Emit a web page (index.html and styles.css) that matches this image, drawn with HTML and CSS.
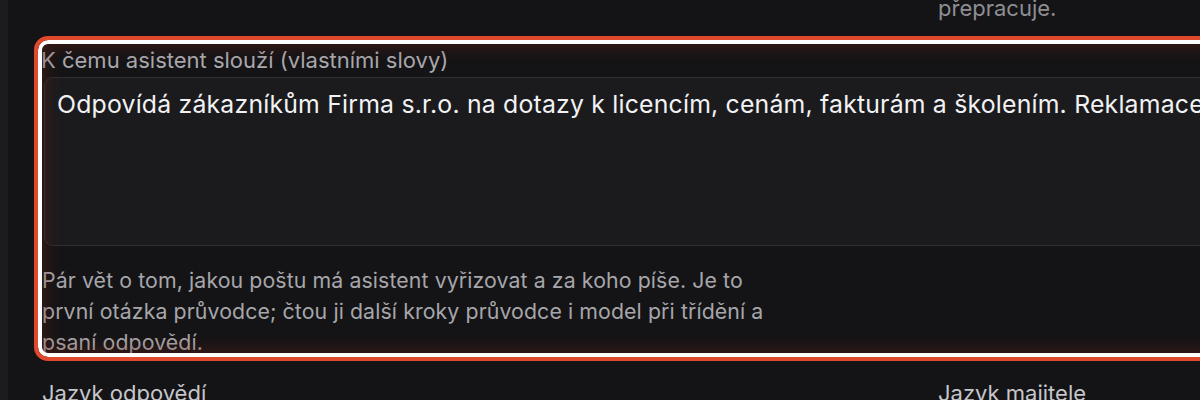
FILE: index.html
```html
<!DOCTYPE html>
<html lang="cs">
<head>
<meta charset="utf-8">
<title>Nastavení asistenta</title>
<link rel="stylesheet" href="styles.css">
</head>
<body>
<div class="page">
  <div class="rail"></div>
  <main class="form">
    <div class="row top-row">
      <div class="cell"></div>
      <p class="hint">přepracuje.</p>
    </div>
    <div class="field highlighted">
      <label class="label" for="purpose">K čemu asistent slouží (vlastními slovy)</label>
      <textarea id="purpose" class="input">Odpovídá zákazníkům Firma s.r.o. na dotazy k licencím, cenám, fakturám a školením. Reklamace předává kolegům.</textarea>
      <p class="help">Pár vět o tom, jakou poštu má asistent vyřizovat a za koho píše. Je to první otázka průvodce; čtou ji další kroky průvodce i model při třídění a psaní odpovědí.</p>
    </div>
    <div class="row">
      <div class="sub-label">Jazyk odpovědí</div>
      <div class="sub-label">Jazyk majitele</div>
    </div>
  </main>
</div>
</body>
</html>
```
FILE: styles.css
```css
html, body {
  margin: 0;
  padding: 0;
  background: #141416;
  overflow: hidden;
  height: 400px;
}
body {
  font-family: Inter, "Noto Sans", sans-serif;
  color: #e8e8ea;
}
.page {
  display: flex;
  height: 400px;
}
.rail {
  width: 8px;
  flex: none;
  background: #1c1c1f;
}
.form {
  flex: none;
  width: 1760px;
  padding-left: 34px;
  display: flex;
  flex-direction: column;
}
.row {
  display: grid;
  grid-template-columns: 860px 1fr;
  column-gap: 36px;
}
.top-row {
  margin-top: -7px;
}
.hint {
  margin: 0;
  font-size: 22px;
  line-height: 31px;
  color: #8e8e93;
}
.field {
  position: relative;
  flex: none;
  margin-top: 20px;
  height: 309px;
}
.field.highlighted::after {
  content: "";
  position: absolute;
  top: -8px;
  left: -8px;
  right: -8px;
  bottom: -8px;
  border: 4px solid #e0492b;
  border-radius: 14px;
  box-shadow: inset 0 0 0 4px #ffffff, inset 0 0 18px 6px rgba(120, 36, 22, 0.45);
  pointer-events: none;
}
.label {
  display: block;
  padding-top: 3px;
  margin-left: -1px;
  font-size: 22px;
  line-height: 26px;
  color: #a9a9ae;
}
.input {
  box-sizing: border-box;
  display: block;
  margin: 4px 0 0 2px;
  width: calc(100% - 2px);
  height: 169px;
  padding: 10px 12px;
  border: 1px solid #2f2f34;
  border-radius: 9px;
  background: #1b1b1e;
  color: #f2f2f4;
  font-family: Inter, "Noto Sans", sans-serif;
  font-size: 24.8px;
  letter-spacing: 0.2px;
  line-height: 32px;
  resize: none;
  outline: none;
}
.help {
  margin: 19px 0 0;
  max-width: 740px;
  font-size: 21.3px;
  letter-spacing: 0.1px;
  line-height: 31px;
  color: #a6a6ab;
}
.sub-label {
  margin-top: 26px;
  font-size: 22px;
  line-height: 28px;
  color: #c6c6ca;
}
```
